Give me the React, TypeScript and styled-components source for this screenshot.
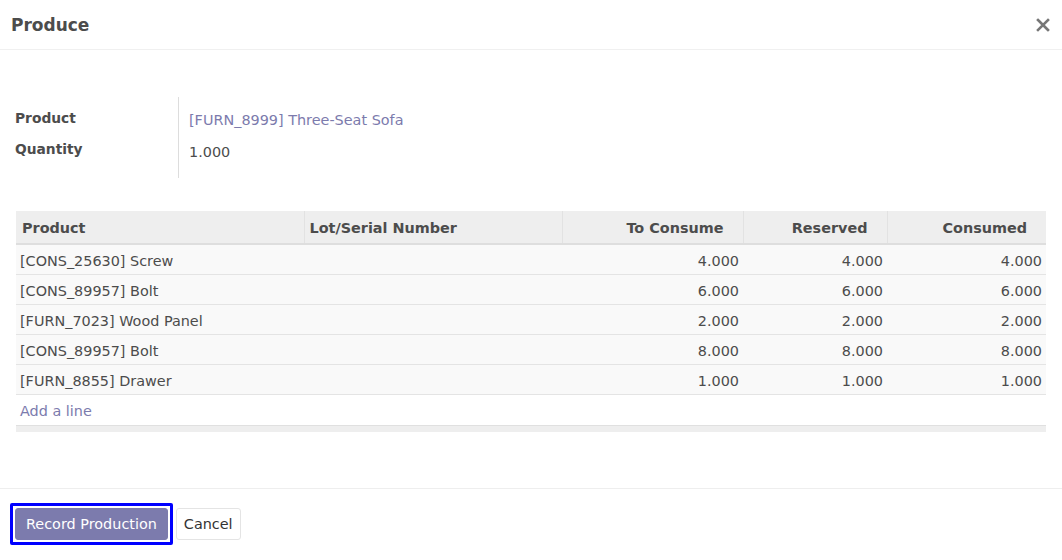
import React from "react";
import styled, { createGlobalStyle } from "styled-components";

const Global = createGlobalStyle`
  html, body { margin: 0; padding: 0; background: #fff; }
  body { font-family: "DejaVu Sans", "Liberation Sans", sans-serif; font-size: 14.4px; color: #4c4c4c; }
  * { box-sizing: border-box; }
`;

const Dialog = styled.div`
  width: 1062px;
  height: 560px;
  display: flex;
  flex-direction: column;
  background: #fff;
`;

const Header = styled.div`
  height: 50px;
  display: flex;
  align-items: center;
  justify-content: space-between;
  padding: 1px 11px 0 11px;
  border-bottom: 1px solid #f0f0f0;
`;

const Title = styled.h4`
  margin: 0;
  font-size: 17px;
  font-weight: bold;
  color: #4c4c4c;
`;

const Close = styled.button`
  border: 0;
  background: none;
  padding: 0;
  margin-right: 1px;
  width: 14px;
  height: 14px;
  display: flex;
  cursor: pointer;
`;

const Body = styled.div`
  flex: 1;
  padding: 47px 16px 0 15px;
`;

const FieldGroup = styled.div`
  display: grid;
  grid-template-columns: 164px 1fr;
  height: 81px;
`;

const Labels = styled.div`
  display: flex;
  flex-direction: column;
  gap: 14px;
  padding-top: 13px;
  border-right: 1px solid #ddd;
`;

const Label = styled.div`
  font-weight: bold;
  line-height: 17px;
  font-size: 13.8px;
  color: #4c4c4c;
`;

const Values = styled.div`
  display: flex;
  flex-direction: column;
  gap: 15px;
  padding: 15px 0 0 10px;
`;

const Value = styled.div<{ $link?: boolean }>`
  line-height: 17px;
  color: ${(p) => (p.$link ? "#7c7bad" : "#4c4c4c")};
`;

const Table = styled.table`
  margin: 33px 0 0 1px;
  width: 1030px;
  border-collapse: collapse;
  table-layout: fixed;
`;

const Th = styled.th<{ $right?: boolean; $w: number }>`
  width: ${(p) => p.$w}px;
  height: 33px;
  background: #eeeeee;
  font-weight: bold;
  text-align: ${(p) => (p.$right ? "right" : "left")};
  padding: 2px ${(p) => (p.$right ? 19 : 4)}px 0 5px;
  border-left: 1px solid #e2e2e2;
  border-bottom: 2px solid #dedede;
  color: #4c4c4c;
  &:first-child { border-left: 0; padding-left: 6px; }
`;

const Tr = styled.tr`
  background: #f9f9f9;
`;

const Td = styled.td<{ $right?: boolean }>`
  height: 30px;
  padding: 3px 4px 0 4px;
  text-align: ${(p) => (p.$right ? "right" : "left")};
  border-bottom: 1px solid #e4e4e4;
  color: #4c4c4c;
  white-space: nowrap;
`;

const AddRow = styled.tr`
  background: #fff;
`;

const AddCell = styled.td`
  height: 31px;
  padding: 3px 4px 0 4px;
  color: #7c7bad;
  border-bottom: 1px solid #e0e0e0;
`;

const FootCell = styled.td`
  height: 7px;
  padding: 0;
  background: #eeeeee;
`;

const Footer = styled.div`
  height: 72px;
  border-top: 1px solid #eeeeee;
  display: flex;
  align-items: center;
  gap: 3px;
  padding: 0 0 2px 10px;
`;

const Focus = styled.div`
  border: 3px solid #0000ff;
  border-radius: 2px;
  padding: 2px;
  display: flex;
`;

const PrimaryButton = styled.button`
  height: 32px;
  padding: 0 10px;
  border: 1px solid #7c7bad;
  border-radius: 3px;
  background: #7c7bad;
  color: #fff;
  font-family: inherit;
  font-size: 14.4px;
  cursor: pointer;
`;

const SecondaryButton = styled.button`
  height: 32px;
  padding: 0 7px;
  border: 1px solid #e4e4e4;
  border-radius: 3px;
  background: #fff;
  color: #333;
  font-family: inherit;
  font-size: 14.4px;
  cursor: pointer;
`;

const rows = [
  ["[CONS_25630] Screw", "4.000", "4.000", "4.000"],
  ["[CONS_89957] Bolt", "6.000", "6.000", "6.000"],
  ["[FURN_7023] Wood Panel", "2.000", "2.000", "2.000"],
  ["[CONS_89957] Bolt", "8.000", "8.000", "8.000"],
  ["[FURN_8855] Drawer", "1.000", "1.000", "1.000"],
];

export default function App() {
  return (
    <>
      <Global />
      <Dialog>
        <Header>
          <Title>Produce</Title>
          <Close aria-label="Close">
            <svg width="14" height="14" viewBox="0 0 14 14">
              <path d="M2 2 L12 12 M12 2 L2 12" stroke="#777" strokeWidth="2.6" strokeLinecap="square" />
            </svg>
          </Close>
        </Header>
        <Body>
          <FieldGroup>
            <Labels>
              <Label>Product</Label>
              <Label>Quantity</Label>
            </Labels>
            <Values>
              <Value $link>[FURN_8999] Three-Seat Sofa</Value>
              <Value>1.000</Value>
            </Values>
          </FieldGroup>
          <Table>
            <thead>
              <tr>
                <Th $w={288}>Product</Th>
                <Th $w={258}>Lot/Serial Number</Th>
                <Th $w={181} $right>To Consume</Th>
                <Th $w={144} $right>Reserved</Th>
                <Th $w={159} $right>Consumed</Th>
              </tr>
            </thead>
            <tbody>
              {rows.map((r, i) => (
                <Tr key={i}>
                  <Td>{r[0]}</Td>
                  <Td></Td>
                  <Td $right>{r[1]}</Td>
                  <Td $right>{r[2]}</Td>
                  <Td $right>{r[3]}</Td>
                </Tr>
              ))}
              <AddRow>
                <AddCell colSpan={5}>Add a line</AddCell>
              </AddRow>
            </tbody>
            <tfoot>
              <tr>
                <FootCell colSpan={5} />
              </tr>
            </tfoot>
          </Table>
        </Body>
        <Footer>
          <Focus>
            <PrimaryButton>Record Production</PrimaryButton>
          </Focus>
          <SecondaryButton>Cancel</SecondaryButton>
        </Footer>
      </Dialog>
    </>
  );
}
